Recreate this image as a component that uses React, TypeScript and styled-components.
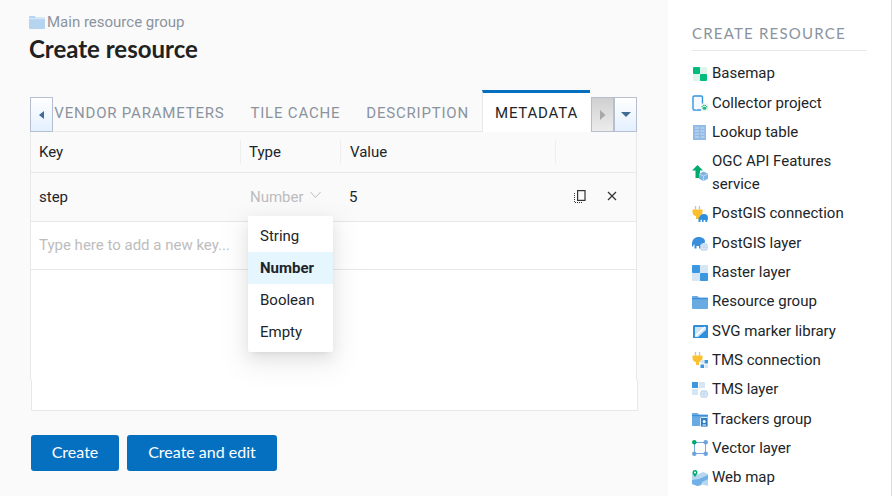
import styled, { createGlobalStyle } from 'styled-components';

const GlobalStyle = createGlobalStyle`
  html, body {
    margin: 0;
    height: 100%;
    overflow: hidden;
  }
  body {
    font-family: Roboto, "Liberation Sans", sans-serif;
    font-size: 15px;
    color: #212529;
    background: #fff;
  }
`;

const Page = styled.div`
  display: flex;
  width: 892px;
  height: 496px;
  overflow: hidden;
`;

const Main = styled.main`
  width: 668px;
  height: 496px;
  box-sizing: border-box;
  padding: 13px 31px 0 30px;
  background: #fafafa;
`;

const Breadcrumb = styled.div`
  display: flex;
  align-items: center;
  gap: 2px;
  margin-left: -1px;
  height: 18px;
  font-size: 15px;
  color: #8a939e;
`;

const Title = styled.h1`
  margin: 1px 0 0 -1px;
  height: 34px;
  font-family: Lato, sans-serif;
  font-size: 24px;
  line-height: 34px;
  font-weight: 700;
  color: #212121;
`;

const TabBar = styled.div`
  display: flex;
  align-items: flex-end;
  height: 42px;
  margin-top: 24px;
`;

const ArrowButton = styled.button<{ $off?: boolean }>`
  flex: none;
  display: flex;
  align-items: center;
  justify-content: center;
  width: 23px;
  height: 35px;
  padding: 0;
  border: 1px solid #b5bfcf;
  background: ${(p) => (p.$off ? 'linear-gradient(#d0d0d0, #ececec)' : 'linear-gradient(#ffffff, #e3f0ff)')};
`;

const ArrowRight = styled(ArrowButton)`
  margin-left: 1px;
`;

const TabScroller = styled.div`
  flex: 1;
  min-width: 0;
  display: flex;
  justify-content: flex-end;
  align-items: flex-end;
  overflow: hidden;
  height: 42px;
`;

const Tab = styled.div<{ $active?: boolean }>`
  flex: none;
  box-sizing: border-box;
  display: flex;
  align-items: center;
  height: ${(p) => (p.$active ? '42px' : '35px')};
  padding: ${(p) => (p.$active ? '4px 12px 3px' : '0 13px 3px')};
  white-space: nowrap;
  font-size: 15px;
  letter-spacing: 0.8px;
  color: ${(p) => (p.$active ? '#212529' : '#8a939e')};
  background: ${(p) => (p.$active ? '#fff' : 'transparent')};
  border-top: ${(p) => (p.$active ? '3px solid #0670c0' : 'none')};
  border-left: ${(p) => (p.$active ? '1px solid #e8e8e8' : 'none')};
  border-bottom: ${(p) => (p.$active ? 'none' : '1px solid #e8e8e8')};
`;

const Panel = styled.div`
  position: relative;
  box-sizing: border-box;
  height: 248px;
  background: #fff;
  border: 1px solid #e8e8e8;
  border-width: 0 1px;
`;

const PanelTail = styled.div`
  box-sizing: border-box;
  height: 31px;
  margin: 0 -1px 0 1px;
  background: #fff;
  border: 1px solid #e8e8e8;
  border-top: none;
`;

const Row = styled.div<{ $h: number; $shade?: boolean }>`
  display: grid;
  grid-template-columns: 210px 100px 215px 1fr;
  align-items: center;
  box-sizing: border-box;
  height: ${(p) => p.$h}px;
  border-bottom: 1px solid #e8e8e8;
  background: ${(p) => (p.$shade ? '#fafafa' : '#fff')};
`;

const HeadCell = styled.div<{ $last?: boolean }>`
  box-sizing: border-box;
  height: 24px;
  line-height: 24px;
  padding-left: 8px;
  border-right: ${(p) => (p.$last ? 'none' : '1px solid #eeeeee')};
  &:nth-child(3) {
    padding-left: 9px;
  }
`;

const Cell = styled.div`
  padding-left: 8px;
  min-width: 0;
`;

const TypeCell = styled(Cell)`
  display: flex;
  align-items: center;
  gap: 6px;
  padding-left: 9px;
  color: #bdbdbd;
`;

const Placeholder = styled(Cell)`
  grid-column: 1 / -1;
  padding-bottom: 1px;
  color: #bdbdbd;
`;

const Actions = styled.div`
  display: flex;
  justify-content: flex-end;
  align-items: center;
  gap: 19px;
  padding: 0 18px 2px 0;
`;

const Menu = styled.ul`
  position: absolute;
  left: 217px;
  top: 84px;
  width: 85px;
  margin: 0;
  padding: 4px 0;
  list-style: none;
  background: #fff;
  border-radius: 2px;
  box-shadow: 0 3px 6px -4px rgba(0, 0, 0, 0.12), 0 6px 16px 0 rgba(0, 0, 0, 0.08), 0 9px 28px 8px rgba(0, 0, 0, 0.05);
`;

const MenuItem = styled.li<{ $active?: boolean }>`
  height: 32px;
  line-height: 32px;
  padding-left: 12px;
  font-weight: ${(p) => (p.$active ? 700 : 400)};
  background: ${(p) => (p.$active ? '#e6f6ff' : 'transparent')};
`;

const Buttons = styled.div`
  display: flex;
  gap: 8px;
  margin: 24px 0 0 1px;
`;

const Button = styled.button<{ $w: number }>`
  width: ${(p) => p.$w}px;
  height: 36px;
  padding: 0 0 3px;
  border: none;
  border-radius: 3px;
  background: #0670c0;
  color: #fff;
  font-family: Lato, sans-serif;
  font-size: 16px;
`;

const Sidebar = styled.aside`
  flex: 1;
  padding: 24px 24px 0 24px;
  border-right: 1px solid #dddddd;
`;

const SidebarTitle = styled.div`
  height: 26px;
  line-height: 19px;
  font-family: Lato, sans-serif;
  font-size: 15px;
  letter-spacing: 1.2px;
  color: #8a939e;
  border-bottom: 1px solid #e8e8e8;
`;

const ResourceList = styled.ul`
  display: flex;
  flex-direction: column;
  gap: 6.3px;
  margin: 11.3px 0 0;
  padding: 0;
  list-style: none;
`;

const ResourceItem = styled.li`
  display: flex;
  align-items: center;
  gap: 4px;
  line-height: 23px;
`;

const IconSvg = styled.svg`
  flex: none;
  display: block;
`;

function Icon({ children, size = 16 }: { children: React.ReactNode; size?: number }) {
  return (
    <IconSvg width={size} height={size} viewBox="0 0 16 16">
      {children}
    </IconSvg>
  );
}

const FolderIcon = ({ light }: { light?: boolean }) => (
  <Icon>
    <path d="M0 3C0 2.400.4 2 1 2h4.500L7 3.500h8c.6 0 1 .4 1 1V14c0 .6-.4 1-1 1H1c-.6 0-1-.4-1-1z" fill={light ? '#b4d4f0' : '#6aaae3'} />
    <rect x="0" y="4" width="16" height="1.200" fill={light ? '#d5e6f6' : '#3c8ed6'} />
  </Icon>
);

const Plug = () => (
  <>
    <path d="M3.500 0v3.500M7.500 0v3.500" stroke="#c4c4c4" strokeWidth="1.400" />
    <path d="M.5 3.500h10V6c0 2.500-1.800 3.800-3.500 4.200V13H4v-2.800C2.300 9.800.5 8.500.5 6z" fill="#fbc02d" />
  </>
);

const Globe = () => (
  <>
    <circle cx="12" cy="12" r="4" fill="#b9d2ec" />
    <path d="M8.500 11h7M8.500 13.300h7M12 8c-2.500 2.500-2.500 5.500 0 8M12 8c2.500 2.500 2.500 5.500 0 8" stroke="#e9f2fa" strokeWidth=".7" fill="none" />
  </>
);

const icons: Record<string, React.ReactNode> = {
  basemap: (
    <Icon>
      <rect x="1" y="1" width="14" height="14" rx="1" fill="#dff5ec" />
      <rect x="1" y="1" width="7" height="7" rx="1" fill="#00bd7e" />
      <rect x="8" y="8" width="7" height="7" rx="1" fill="#00bd7e" />
    </Icon>
  ),
  collector: (
    <Icon>
      <rect x="1" y="1" width="9.500" height="14" rx="1.200" fill="#f6fafe" stroke="#3294e0" strokeWidth="1.400" />
      <rect x="3.500" y="13.500" width="1.500" height="1" fill="#fff" />
      <rect x="9" y="8.500" width="7" height="7.500" fill="#e7f6ef" />
      <ellipse cx="12.500" cy="13.300" rx="1.800" ry="1.500" fill="#1bb57f" />
      <circle cx="10.300" cy="11.700" r=".7" fill="#1bb57f" />
      <circle cx="11.700" cy="10.400" r=".7" fill="#1bb57f" />
      <circle cx="13.300" cy="10.400" r=".7" fill="#1bb57f" />
      <circle cx="14.700" cy="11.700" r=".7" fill="#1bb57f" />
    </Icon>
  ),
  lookup: (
    <Icon>
      <rect x="1" y="1" width="13" height="15" fill="#92bae6" />
      <path d="M3 4h4M8.500 4h4M3 7h4M8.500 7h4M3 10h4M8.500 10h4M3 13h4M8.500 13h4" stroke="#cfe0f3" strokeWidth="1" />
    </Icon>
  ),
  ogc: (
    <Icon>
      <path d="M5.500 0L11 5.500H8V13H3.500V5.500H0z" fill="#00a96e" />
      <path d="M11.500 6.500l4.500 2.300v4.900L11.500 16 7 13.700V8.800z" fill="#7fb3e2" />
      <path d="M7 8.800l4.500 2.300 4.500-2.300M11.500 11.100V16" stroke="#d5e6f6" strokeWidth=".7" fill="none" />
    </Icon>
  ),
  postgisConn: (
    <Icon>
      <Plug />
      <path d="M6.500 16v-2.500C6.500 10.500 9 8 12 8s4 2 4 4.200c0 1.500-.8 2-.9 3.800h-1.700v-2h-1.800v2H10v-2.200H8.500V16z" fill="#2f8fdc" />
    </Icon>
  ),
  postgisLayer: (
    <Icon>
      <path d="M0 9c0-4.500 3-7 6.500-7S13 3.500 13 6.500c0 2.500-2.500 3.300-3.500 4.500v2.500H7V11H4.500v2.500H2.500V9.500C1.500 9.800 1.200 10.500 1.200 11.500H0z" fill="#3a8fdc" />
      <Globe />
    </Icon>
  ),
  raster: (
    <Icon>
      <rect x="0" y="0" width="16" height="16" rx="1" fill="#d7e6f5" />
      <rect x="0" y="0" width="8" height="8" rx="1" fill="#3a97e0" />
      <rect x="8" y="8" width="8" height="8" rx="1" fill="#3a97e0" />
    </Icon>
  ),
  group: <FolderIcon />,
  svgLib: (
    <Icon>
      <path d="M2 2h14v13H1V3z" fill="#2f8fdc" />
      <path d="M3 4h11v3L6 14H3z" fill="#cfe3f6" />
      <path d="M3.500 13L13 4" stroke="#fff" strokeWidth="1.600" />
    </Icon>
  ),
  tmsConn: (
    <Icon>
      <Plug />
      <rect x="8.500" y="8" width="3.500" height="3.500" fill="#d7e6f5" />
      <rect x="12.500" y="8" width="3.500" height="3.500" fill="#3a97e0" />
      <rect x="8.500" y="12.500" width="3.500" height="3.500" fill="#3a97e0" />
      <rect x="12.500" y="12.500" width="3.500" height="3.500" fill="#d7e6f5" />
    </Icon>
  ),
  tmsLayer: (
    <Icon>
      <rect x="0" y="0" width="6" height="6" fill="#3a97e0" />
      <rect x="7" y="0" width="6" height="6" fill="#d7e6f5" />
      <rect x="0" y="7" width="6" height="6" fill="#d7e6f5" />
      <Globe />
    </Icon>
  ),
  trackers: (
    <Icon>
      <path d="M0 3C0 2.400.4 2 1 2h4.500L7 3.500h8c.6 0 1 .4 1 1V14c0 .6-.4 1-1 1H1c-.6 0-1-.4-1-1z" fill="#6aaae3" />
      <rect x="0" y="4" width="16" height="1.200" fill="#3c8ed6" />
      <rect x="8.500" y="6.500" width="7.500" height="9.500" rx="1" fill="#2f7fc6" stroke="#fff" strokeWidth=".8" />
      <circle cx="12.200" cy="10.500" r="1.500" fill="#fff" />
      <path d="M10.500 14h3.500" stroke="#fff" strokeWidth="1" />
    </Icon>
  ),
  vector: (
    <Icon>
      <rect x="2.500" y="2.500" width="11" height="11" fill="none" stroke="#7aa9dc" strokeWidth="1" />
      <circle cx="2.300" cy="2.300" r="2.300" fill="#00a96e" />
      <circle cx="13.700" cy="2.300" r="2.300" fill="#6ea3dc" />
      <circle cx="2.300" cy="13.700" r="2.300" fill="#6ea3dc" />
      <circle cx="13.700" cy="13.700" r="2.300" fill="#6ea3dc" />
    </Icon>
  ),
  webmap: (
    <Icon>
      <path d="M0 3l5.500 1.500L11 2l5 2v12l-5-1.500L5.500 16 0 14z" fill="#b7d6f0" />
      <path d="M0 10l7-1 9-4v4l-6 3-1 3-3.500 1L0 14z" fill="#6fb0e6" />
      <path d="M3 0a2.500 2.500 0 0 1 2.500 2.500C5.500 4 3 7 3 7S.5 4 .5 2.500A2.500 2.500 0 0 1 3 0z" fill="#00a96e" />
      <circle cx="3" cy="2.500" r="1" fill="#fff" />
    </Icon>
  ),
};

const resources = [
  { key: 'basemap', label: 'Basemap' },
  { key: 'collector', label: 'Collector project' },
  { key: 'lookup', label: 'Lookup table' },
  { key: 'ogc', label: 'OGC API Features service' },
  { key: 'postgisConn', label: 'PostGIS connection' },
  { key: 'postgisLayer', label: 'PostGIS layer' },
  { key: 'raster', label: 'Raster layer' },
  { key: 'group', label: 'Resource group' },
  { key: 'svgLib', label: 'SVG marker library' },
  { key: 'tmsConn', label: 'TMS connection' },
  { key: 'tmsLayer', label: 'TMS layer' },
  { key: 'trackers', label: 'Trackers group' },
  { key: 'vector', label: 'Vector layer' },
  { key: 'webmap', label: 'Web map' },
];

const tabs = ['Vendor parameters', 'Tile cache', 'Description'];
const types = ['String', 'Number', 'Boolean', 'Empty'];

export default function App() {
  return (
    <Page>
      <GlobalStyle />
      <Main>
        <Breadcrumb>
          <FolderIcon light />
          Main resource group
        </Breadcrumb>
        <Title>Create resource</Title>
        <TabBar>
          <ArrowButton>
            <svg width="6" height="8" viewBox="0 0 6 8">
              <path d="M5 0v8L0 4z" fill="#3f6d96" />
            </svg>
          </ArrowButton>
          <TabScroller>
            {tabs.map((t) => (
              <Tab key={t}>{t.toUpperCase()}</Tab>
            ))}
            <Tab $active>METADATA</Tab>
          </TabScroller>
          <ArrowRight $off>
            <svg width="6" height="10" viewBox="0 0 6 10">
              <path d="M0 0v10l5.500-5z" fill="#a8a8a8" />
            </svg>
          </ArrowRight>
          <ArrowButton>
            <svg width="10" height="5" viewBox="0 0 10 5">
              <path d="M0 0h10L5 5z" fill="#3f6d96" />
            </svg>
          </ArrowButton>
        </TabBar>
        <Panel>
          <Row $h={41} $shade>
            <HeadCell>Key</HeadCell>
            <HeadCell>Type</HeadCell>
            <HeadCell>Value</HeadCell>
            <HeadCell $last />
          </Row>
          <Row $h={49} $shade>
            <Cell>step</Cell>
            <TypeCell>
              Number
              <svg width="12" height="12" viewBox="0 0 12 12" fill="none">
                <path d="M.5 1l5 5.500 5-5.500" stroke="#bdbdbd" strokeWidth="1" />
              </svg>
            </TypeCell>
            <Cell>5</Cell>
            <Actions>
              <svg width="14" height="14" viewBox="0 0 14 14" fill="none">
                <rect x="4.600" y="1.600" width="7.400" height="9.800" stroke="#333" strokeWidth="1.200" />
                <path d="M1.500 4v9.500h8" stroke="#333" strokeWidth="1" strokeDasharray="1 1" />
              </svg>
              <svg width="12" height="12" viewBox="0 0 12 12" fill="none">
                <path d="M2 2l8 8M10 2l-8 8" stroke="#333" strokeWidth="1.200" />
              </svg>
            </Actions>
          </Row>
          <Row $h={48}>
            <Placeholder>Type here to add a new key...</Placeholder>
          </Row>
          <Menu>
            {types.map((t) => (
              <MenuItem key={t} $active={t === 'Number'}>
                {t}
              </MenuItem>
            ))}
          </Menu>
        </Panel>
        <PanelTail />
        <Buttons>
          <Button $w={88}>Create</Button>
          <Button $w={150}>Create and edit</Button>
        </Buttons>
      </Main>
      <Sidebar>
        <SidebarTitle>CREATE RESOURCE</SidebarTitle>
        <ResourceList>
          {resources.map((r) => (
            <ResourceItem key={r.key}>
              {icons[r.key]}
              <span>{r.label}</span>
            </ResourceItem>
          ))}
        </ResourceList>
      </Sidebar>
    </Page>
  );
}
